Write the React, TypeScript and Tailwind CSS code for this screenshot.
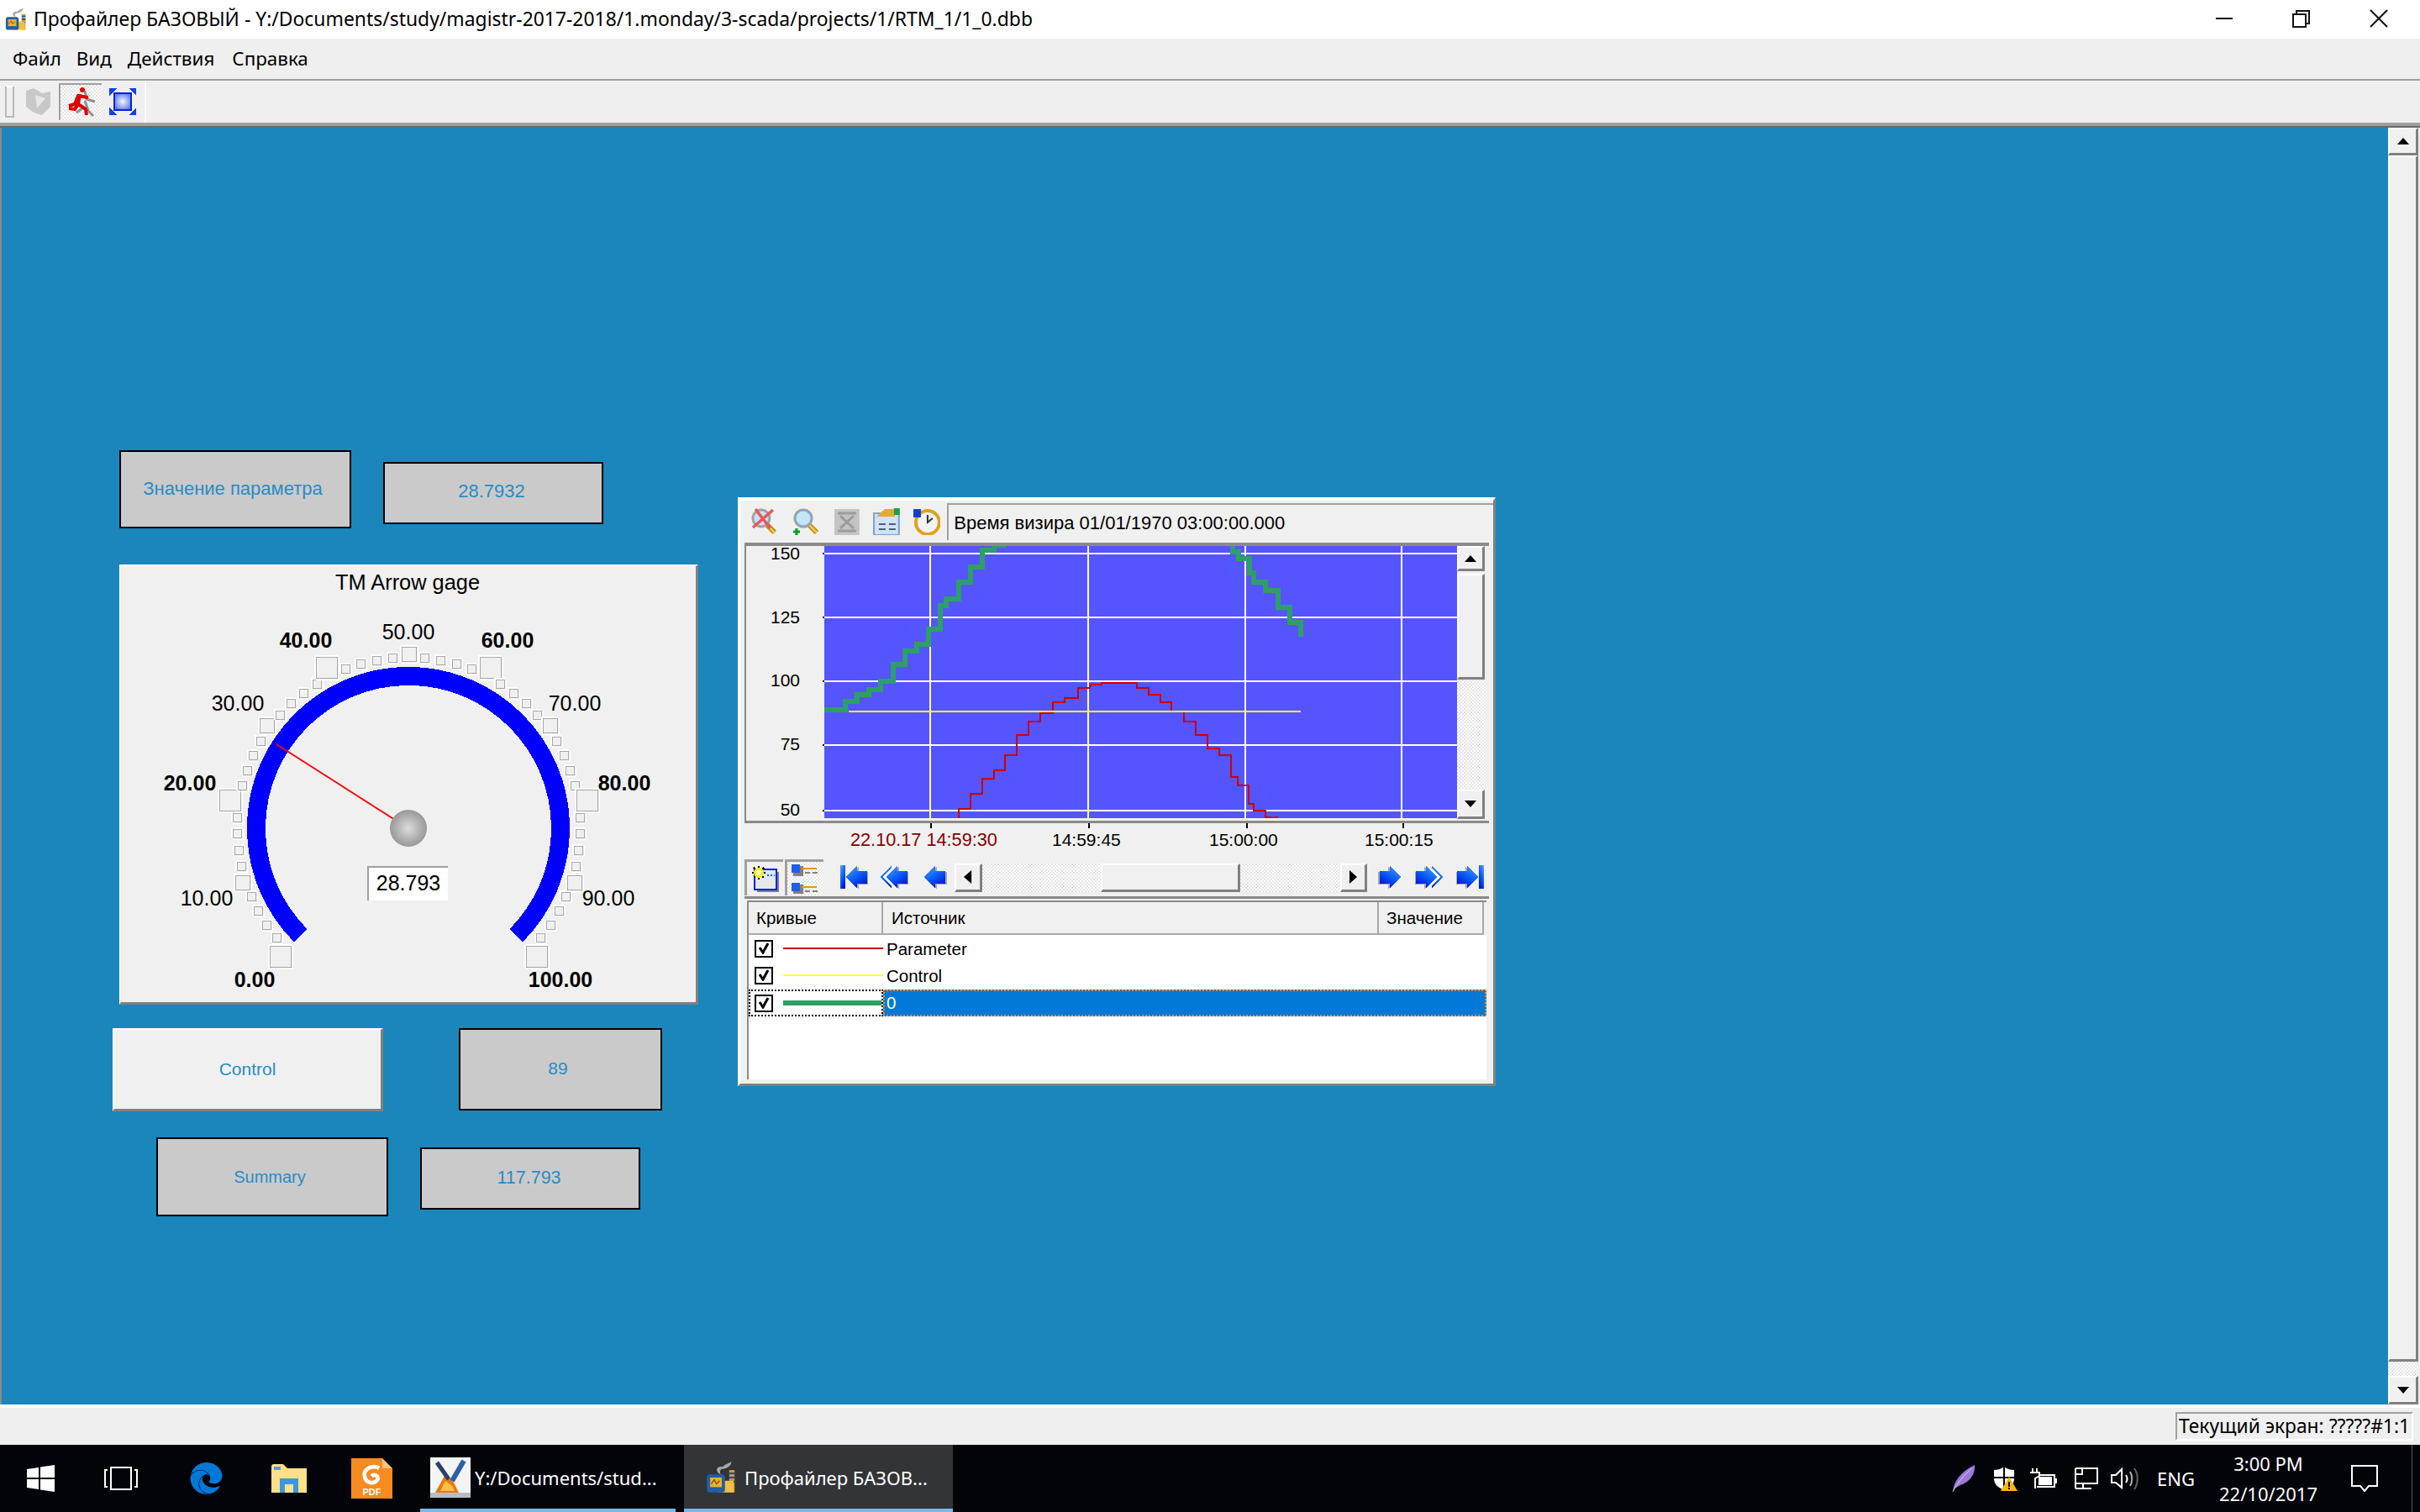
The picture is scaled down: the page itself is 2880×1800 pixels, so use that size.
import { FaEdge } from 'react-icons/fa';

const CHECKER = "bg-[image:repeating-conic-gradient(#e4e4e4_0_25%,#ffffff_0_50%)] bg-[length:4px_4px]";

// step traces, in the plot's own 1284x972 grid
const GREEN_A = "190,794 233,794 233,764 257,764 257,740 281,740 281,722 305,722 305,692 329,692 329,632 353,632 353,584 377,584 377,560 401,560 401,506 425,506 425,422 438,422 438,398 463,398 463,338 487,338 487,284 511,284 511,224 535,224 535,206 560,206";
const GREEN_B = "1012,200 1018,200 1018,230 1030,230 1030,254 1052,254 1052,306 1062,306 1062,338 1086,338 1086,368 1110,368 1110,428 1134,428 1134,482 1157,482 1157,534";
const RED = "462,1190 462,1150 486,1150 486,1095 510,1095 510,1041 534,1041 534,1011 557,1011 557,957 581,957 581,885 605,885 605,837 629,837 629,806 653,806 653,767 677,767 677,752 705,752 705,716 728,716 728,704 752,704 752,698 824,698 824,716 848,716 848,741 872,741 872,767 895,767 895,800 919,800 919,837 943,837 943,885 967,885 967,933 991,933 991,957 1015,957 1015,1035 1029,1035 1029,1065 1051,1065 1051,1130 1062,1130 1062,1155 1086,1155 1086,1179 1110,1179";

const H_GRID = [236, 465, 692, 920, 1155];
const V_GRID = [404, 725, 1045, 1361];

const GAUGE_LABELS = [
  { text: '0.00', x: 303, y: 1166, bold: true },
  { text: '10.00', x: 246, y: 1069, bold: false },
  { text: '20.00', x: 226, y: 932, bold: true },
  { text: '30.00', x: 283, y: 837, bold: false },
  { text: '40.00', x: 364, y: 762, bold: true },
  { text: '50.00', x: 486, y: 752, bold: false },
  { text: '60.00', x: 604, y: 762, bold: true },
  { text: '70.00', x: 684, y: 837, bold: false },
  { text: '80.00', x: 743, y: 932, bold: true },
  { text: '90.00', x: 724, y: 1069, bold: false },
  { text: '100.00', x: 667, y: 1166, bold: true },
];

function GaugeTicks() {
  const ticks = [];
  for (let i = 0; i <= 50; i++) {
    const big = i % 10 === 0;
    const mid = i % 10 === 5;
    const size = big ? 25 : mid ? 17 : 10;
    const r = big ? 215 : mid ? 208 : 204;
    const a = ((225 - 5.4 * i) * Math.PI) / 180;
    const x = Math.round(486 + r * Math.cos(a) - size / 2);
    const y = Math.round(986 - r * Math.sin(a) - size / 2);
    ticks.push(
      <g key={i} shapeRendering="crispEdges">
        <rect x={x} y={y} width={size} height={size} fill="#f0f0f0" stroke="#a8a8a8" strokeWidth="1" />
        <path d={`M${x - 1} ${y + size + 1}V${y - 1}H${x + size + 1}`} fill="none" stroke="#ffffff" strokeWidth="2" />
        <path d={`M${x + size + 2} ${y}V${y + size + 2}H${x}`} fill="none" stroke="#ffffff" strokeWidth="1" />
      </g>
    );
  }
  return <>{ticks}</>;
}

function Gauge() {
  return (
    <div className="absolute left-[140px] top-[520px] w-[689px] h-[524px] bg-[#f0f0f0] border-t-2 border-l-2 border-white border-r-[3px] border-b-[3px] border-r-[#808080] border-b-[#808080]">
      <svg viewBox="144 674 684 519" className="w-[684px] h-[519px] block" fontFamily="Liberation Sans, sans-serif">
        <defs>
          <radialGradient id="hub">
            <stop offset="0" stopColor="#dcdcdc" />
            <stop offset="1" stopColor="#989898" />
          </radialGradient>
        </defs>
        <text x="485" y="693" textAnchor="middle" dominantBaseline="central" fontSize="25.4" fill="#000">TM Arrow gage</text>
        <GaugeTicks />
        <path d="M358 1114A181 181 0 1 1 614 1114" fill="none" stroke="#0000ff" strokeWidth="22" shapeRendering="crispEdges" />
        <line x1="329" y1="886" x2="470" y2="976" stroke="#ff0000" strokeWidth="2" />
        <circle cx="486" cy="986" r="22" fill="url(#hub)" />
        {GAUGE_LABELS.map((l) => (
          <text key={l.text} x={l.x} y={l.y} textAnchor="middle" dominantBaseline="central" fontSize="25" fontWeight={l.bold ? 700 : 400} fill="#000">
            {l.text}
          </text>
        ))}
        <rect x="437" y="1031" width="96" height="41" fill="#ffffff" />
        <path d="M438 1072V1032H533" fill="none" stroke="#a0a0a0" strokeWidth="2" />
        <text x="486" y="1051" textAnchor="middle" dominantBaseline="central" fontSize="25" fill="#000">28.793</text>
      </svg>
    </div>
  );
}

function ValueBox({ text, className }: { text: string; className: string }) {
  return (
    <div className={`absolute flex items-center justify-center bg-[#cacaca] border-2 border-black text-[#2a8cc4] ${className}`}>
      {text}
    </div>
  );
}

function Tri({ dir, size = 14 }: { dir: 'up' | 'down' | 'left' | 'right'; size?: number }) {
  const points = { up: '0,8 14,8 7,0', down: '0,0 14,0 7,8', left: '8,0 8,14 0,7', right: '0,0 0,14 8,7' }[dir];
  const vertical = dir === 'up' || dir === 'down';
  return (
    <svg viewBox={vertical ? '0 0 14 8' : '0 0 8 14'} width={vertical ? size : (size * 8) / 14} height={vertical ? (size * 8) / 14 : size}>
      <polygon points={points} fill="#000" />
    </svg>
  );
}

function ScrollBtn({ className, children }: { className: string; children?: React.ReactNode }) {
  return (
    <div className={`flex items-center justify-center bg-[#f0f0f0] border-t-2 border-l-2 border-white border-r-[3px] border-b-[3px] border-r-[#808080] border-b-[#808080] ${className}`}>
      {children}
    </div>
  );
}

function Arrow({ kind, flip }: { kind: 'single' | 'double' | 'end'; flip?: boolean }) {
  const id = `${kind}${flip ? 'r' : 'l'}`;
  const w = kind === 'single' ? 27 : 33;
  const head = (dx: number, fill: string, dy = 0) => (
    <polygon
      transform={`translate(${dx} ${dy})`}
      points="0,14 13,0 13,7 25,7 25,22 13,22 13,28"
      fill={fill}
    />
  );
  return (
    <svg viewBox={`0 0 ${w} 30`} width={w} height={30} shapeRendering="crispEdges" style={flip ? { transform: 'scaleX(-1)' } : undefined}>
      <defs>
        <linearGradient id={id} x1="0" y1="0" x2="0.6" y2="1">
          <stop offset="0" stopColor="#5aa8ff" />
          <stop offset="0.55" stopColor="#0a60f8" />
          <stop offset="1" stopColor="#0018d8" />
        </linearGradient>
      </defs>
      {kind === 'end' && <rect x="0" y="0" width="6" height="28" fill={`url(#${id})`} />}
      {kind === 'single' && (
        <>
          {head(2, '#a8a8a8', 1)}
          {head(0, `url(#${id})`)}
        </>
      )}
      {kind === 'double' && (
        <>
          {head(0, `url(#${id})`)}
          {head(3, '#ffffff')}
          {head(9, '#a8a8a8', 1)}
          {head(7, `url(#${id})`)}
        </>
      )}
      {kind === 'end' && (
        <>
          {head(9, '#a8a8a8', 1)}
          {head(7, `url(#${id})`)}
        </>
      )}
    </svg>
  );
}

function Magnifier({ crossed }: { crossed?: boolean }) {
  return (
    <svg viewBox="0 0 32 32" className="w-[32px] h-[32px]">
      <line x1="19" y1="19" x2="29" y2="29" stroke="#b88410" strokeWidth="6" />
      <line x1="19" y1="19" x2="29" y2="29" stroke="#f4c848" strokeWidth="3" />
      <circle cx="13" cy="12" r="10" fill="#c4e4fa" stroke={crossed ? '#a8a0a0' : '#94a4b0'} strokeWidth="3" />
      {crossed ? (
        <path d="M6 1L24 24M27 2L3 23" stroke="#e8585a" strokeWidth="3.5" />
      ) : (
        <path d="M1 28H9M5 24V32" stroke="#00a020" strokeWidth="3" />
      )}
    </svg>
  );
}

function ChartToolbar() {
  return (
    <div className="h-[50px] flex items-center pl-[12px]">
      <Magnifier crossed />
      <div className="ml-[18px]">
        <Magnifier />
      </div>
      <svg viewBox="0 0 30 31" className="w-[30px] h-[31px] ml-[18px]">
        <rect width="30" height="31" fill="#c4c4c4" />
        <path d="M4 5H26M4 26H26M7 8L23 23M23 8L7 23" stroke="#9c9c9c" strokeWidth="3" />
      </svg>
      <svg viewBox="0 0 32 32" className="w-[32px] h-[32px] ml-[16px]">
        <rect x="1" y="6" width="30" height="26" fill="#cfe2f6" stroke="#7da2ce" strokeWidth="2" />
        <path d="M4 10L14 1H26V10H14Z" fill="#e8a830" />
        <rect x="25" y="0" width="7" height="8" fill="#20a040" />
        <path d="M7 19H15M19 19H27M7 25H15M19 25H27" stroke="#4a6078" strokeWidth="2" />
      </svg>
      <svg viewBox="0 0 34 32" className="w-[34px] h-[32px] ml-[15px]">
        <circle cx="18" cy="17" r="14" fill="#f0f4f8" stroke="#e0a020" strokeWidth="4" />
        <path d="M1 1H10V11L1 11Z" fill="#1040d0" />
        <path d="M18 8V17L24 12" fill="none" stroke="#303030" strokeWidth="2" />
      </svg>
      <div className="ml-[8px] w-[653px] h-[44px] border-t-2 border-l-2 border-[#a0a0a0] flex items-center pl-[6px] text-[22px] text-black whitespace-nowrap">
        Время визира 01/01/1970 03:00:00.000
      </div>
    </div>
  );
}

function Plot() {
  return (
    <svg viewBox="190 210 1284 972" preserveAspectRatio="none" className="w-[753px] h-[324px] block bg-[#5555ff]">
      {H_GRID.map((y) => (
        <line key={y} x1="190" x2="1474" y1={y} y2={y} stroke="#fff" strokeWidth="2" vectorEffect="non-scaling-stroke" shapeRendering="crispEdges" />
      ))}
      {V_GRID.map((x) => (
        <line key={x} x1={x} x2={x} y1="210" y2="1182" stroke="#fff" strokeWidth="2" vectorEffect="non-scaling-stroke" shapeRendering="crispEdges" />
      ))}
      <polyline points={GREEN_A} fill="none" stroke="#2ca066" strokeWidth="6" vectorEffect="non-scaling-stroke" shapeRendering="crispEdges" />
      <polyline points={GREEN_B} fill="none" stroke="#2ca066" strokeWidth="6" vectorEffect="non-scaling-stroke" shapeRendering="crispEdges" />
      <polyline points={RED} fill="none" stroke="#cc0000" strokeWidth="2" vectorEffect="non-scaling-stroke" shapeRendering="crispEdges" />
      <line x1="240" x2="1156" y1="801" y2="801" stroke="#ffff33" strokeWidth="2" vectorEffect="non-scaling-stroke" shapeRendering="crispEdges" />
    </svg>
  );
}

function ChartArea() {
  const yLabels = [
    { t: '150', c: 'top-[8px]', d: 'top-[8px]' },
    { t: '125', c: 'top-[84px]', d: 'top-[84px]' },
    { t: '100', c: 'top-[159px]', d: 'top-[160px]' },
    { t: '75', c: 'top-[235px]', d: 'top-[236px]' },
    { t: '50', c: 'top-[313px]', d: 'top-[314px]' },
  ];
  return (
    <div className="mx-[5px] h-[334px] flex border-t-4 border-b-[3px] border-[#8a8a8a]">
      <div className="relative w-[95px] h-full border-l-2 border-[#8a8a8a]">
        {yLabels.map((l) => (
          <div key={l.t}>
            <span className={`absolute right-[29px] -translate-y-1/2 text-[21px] leading-none text-black ${l.c}`}>{l.t}</span>
            <span className={`absolute right-0 w-[2px] h-[2px] bg-black ${l.d}`} />
          </div>
        ))}
      </div>
      <Plot />
      <div className="w-[33px] flex flex-col">
        <ScrollBtn className="h-[30px]"><Tri dir="up" /></ScrollBtn>
        <div className="h-[3px]" />
        <ScrollBtn className="h-[126px]" />
        <div className={`h-[131px] ${CHECKER}`} />
        <ScrollBtn className="h-[35px]"><Tri dir="down" /></ScrollBtn>
      </div>
    </div>
  );
}

function TimeAxis() {
  const ticks = ['left-[226px]', 'left-[414px]', 'left-[602px]', 'left-[788px]'];
  return (
    <div className="relative h-[42px] text-[21px] leading-none">
      {ticks.map((t) => (
        <span key={t} className={`absolute top-0 w-[2px] h-[6px] bg-black ${t}`} />
      ))}
      <span className="absolute left-[131px] top-[9px] text-[21.7px] text-[#8b0000] whitespace-nowrap">22.10.17 14:59:30</span>
      <span className="absolute left-[371px] top-[9px] text-black">14:59:45</span>
      <span className="absolute left-[558px] top-[9px] text-black">15:00:00</span>
      <span className="absolute left-[743px] top-[9px] text-black">15:00:15</span>
    </div>
  );
}

function NavRow() {
  return (
    <div className="h-[45px] flex items-center pl-[5px]">
      <div className="w-[46px] h-[43px] border-t-[3px] border-l-[3px] border-[#a0a0a0] flex items-center justify-center bg-[#f0f0f0]">
        <svg viewBox="0 0 32 32" className="w-[32px] h-[32px]" shapeRendering="crispEdges">
          <rect x="6" y="8" width="26" height="24" fill="#808080" />
          <rect x="3" y="5" width="26" height="24" fill="#dce8fa" stroke="#1020e0" strokeWidth="2" />
          <rect x="5" y="17" width="22" height="10" fill="#e8e8e8" />
          <path d="M18 12H27" stroke="#2060e0" strokeWidth="2" strokeDasharray="2 2" />
          <path d="M0 9H16M8 1V17M2 3L14 15M14 3L2 15" stroke="#000" strokeWidth="1.5" />
          <circle cx="8" cy="9" r="6" fill="#f8f000" />
          <circle cx="8" cy="9" r="3" fill="#fffbc0" />
        </svg>
      </div>
      <div className={`ml-[2px] w-[46px] h-[43px] border-t-[3px] border-l-[3px] border-[#a0a0a0] flex items-center justify-center ${CHECKER}`}>
        <svg viewBox="0 0 34 36" className="w-[34px] h-[36px]" shapeRendering="crispEdges">
          <rect x="2" y="3" width="12" height="12" fill="#808080" />
          <rect x="0" y="1" width="10" height="10" fill="#1f5fe8" />
          <path d="M12 6H30" stroke="#e09a10" strokeWidth="2" />
          <path d="M16 11H32" stroke="#808080" strokeWidth="2" strokeDasharray="6 3" />
          <rect x="2" y="25" width="12" height="12" fill="#808080" />
          <rect x="0" y="23" width="10" height="10" fill="#1f5fe8" />
          <path d="M12 28H30" stroke="#e09a10" strokeWidth="2" />
          <path d="M16 33H32" stroke="#808080" strokeWidth="2" strokeDasharray="6 3" />
        </svg>
      </div>
      <div className="ml-[20px] flex"><Arrow kind="end" /></div>
      <div className="ml-[15px] flex"><Arrow kind="double" /></div>
      <div className="ml-[19px] flex"><Arrow kind="single" /></div>
      <div className="ml-[9px] w-[491px] h-[34px] flex">
        <ScrollBtn className="w-[33px]"><Tri dir="left" size={16} /></ScrollBtn>
        <div className={`w-[141px] ${CHECKER}`} />
        <ScrollBtn className="w-[166px]" />
        <div className={`w-[119px] ${CHECKER}`} />
        <ScrollBtn className="w-[32px]"><Tri dir="right" size={16} /></ScrollBtn>
      </div>
      <div className="ml-[13px] flex"><Arrow kind="single" flip /></div>
      <div className="ml-[17px] flex"><Arrow kind="double" flip /></div>
      <div className="ml-[16px] flex"><Arrow kind="end" flip /></div>
    </div>
  );
}

function CheckBox() {
  return (
    <span className="w-[22px] h-[21px] border-2 border-black bg-white flex items-center justify-center shrink-0">
      <svg viewBox="0 0 14 14" className="w-[14px] h-[14px]"><path d="M2 6L6 12L12 1" fill="none" stroke="#000" strokeWidth="3" /></svg>
    </span>
  );
}

function CurveTable() {
  return (
    <div className="mt-[2px] mx-[8px] h-[213px] bg-white border-t-2 border-l-2 border-[#8a8a8a] text-[20.5px] text-black">
      <div className="flex h-[39px] bg-[#f0f0f0]">
        <div className="w-[160px] pl-[9px] pt-[2px] flex items-center border-r-2 border-b-2 border-[#a8a8a8]">Кривые</div>
        <div className="w-[590px] pl-[10px] pt-[2px] flex items-center border-r-2 border-b-2 border-[#a8a8a8]">Источник</div>
        <div className="w-[125px] pl-[9px] pt-[2px] flex items-center border-r-2 border-b-2 border-[#a8a8a8]">Значение</div>
      </div>
      <div className="flex h-[32px] items-center">
        <div className="w-[160px] pl-[7px] flex items-center">
          <CheckBox />
          <span className="ml-[12px] flex-1 h-[2px] bg-[#cc0000]" />
        </div>
        <span className="pl-[4px] pt-[2px]">Parameter</span>
      </div>
      <div className="flex h-[32px] items-center">
        <div className="w-[160px] pl-[7px] flex items-center">
          <CheckBox />
          <span className="ml-[12px] flex-1 h-[2px] bg-[#ffff33]" />
        </div>
        <span className="pl-[4px] pt-[2px]">Control</span>
      </div>
      <div className="flex h-[32px] mt-[1px]">
        <div className="w-[160px] pl-[5px] flex items-center border-2 border-dotted border-black">
          <CheckBox />
          <span className="ml-[12px] flex-1 h-[6px] bg-[#2ca066]" />
        </div>
        <div className="flex-1 pl-[2px] flex items-center bg-[#0078d7] border-2 border-dotted border-[#ff8a1e] text-white">0</div>
      </div>
    </div>
  );
}

function ChartWindow() {
  return (
    <div className="absolute left-[876px] top-[440px] w-[902px] h-[701px] bg-[#f0f0f0] border-t-4 border-l-[3px] border-white border-r-[3px] border-b-[3px] border-r-[#808080] border-b-[#808080]">
      <ChartToolbar />
      <ChartArea />
      <TimeAxis />
      <NavRow />
      <div className="mx-[5px] h-[3px] bg-[#8a8a8a]" />
      <CurveTable />
    </div>
  );
}

function FactoryIcon({ className }: { className: string }) {
  return (
    <svg viewBox="0 0 30 32" className={className}>
      <path d="M12 12C8 8 12 5 16 6C18 3 22 3 24 1C24 6 18 8 15 8C13 9 13 11 14 13Z" fill="#a8a8a8" />
      <rect x="22" y="9" width="5" height="21" fill="#e8a020" />
      <path d="M22 12H27M22 16H27M22 20H27" stroke="#2050a0" strokeWidth="2" />
      <rect x="12" y="19" width="14" height="11" fill="#f0c040" />
      <rect x="1" y="13" width="17" height="17" rx="3" fill="#1f5fa8" />
      <rect x="4" y="16" width="11" height="9" fill="#e8b030" />
      <path d="M5 22L8 18L10 22L13 19" fill="none" stroke="#805010" strokeWidth="1" />
    </svg>
  );
}

function RunnerIcon() {
  return (
    <svg viewBox="0 0 36 36" className="w-[36px] h-[36px]">
      <g fill="none" stroke="#909090" strokeWidth="3">
        <path d="M22 4L24 14L34 17M22 16L26 28L32 34M20 24L12 30" />
      </g>
      <circle cx="19" cy="3" r="3" fill="#e00000" />
      <g fill="none" stroke="#e00000" strokeWidth="4">
        <path d="M3 22L10 20L14 10L26 12" />
        <path d="M16 8L14 20L23 26L24 33" />
        <path d="M14 20L10 26L3 25" />
      </g>
    </svg>
  );
}

function TopToolbar() {
  return (
    <div className="h-[54px] flex bg-[#efefef] border-b-4 border-[#a0a0a0]">
      <div className="w-[172px] flex items-center">
        <div className="ml-[6px] w-[11px] h-[38px] border-2 border-[#b8b8b8] border-t-white" />
        <svg viewBox="0 0 30 32" className="ml-[13px] w-[30px] h-[32px]">
          <path d="M1 3L10 0L20 6L30 4V22L20 32L10 29L1 22Z" fill="#c8c8c8" />
          <path d="M12 8L24 12L14 24Z" fill="#e8e8e8" />
        </svg>
        <div className={`ml-[10px] w-[51px] h-[44px] border-t-2 border-l-2 border-[#a0a0a0] flex items-center justify-center ${CHECKER}`}>
          <RunnerIcon />
        </div>
        <svg viewBox="0 0 32 32" className="ml-[9px] w-[32px] h-[32px]" shapeRendering="crispEdges">
          <defs>
            <radialGradient id="fit">
              <stop offset="0" stopColor="#f4f8ff" />
              <stop offset="1" stopColor="#6a8ae8" />
            </radialGradient>
          </defs>
          <rect x="6" y="6" width="20" height="20" fill="url(#fit)" stroke="#0a20e0" strokeWidth="2" />
          <path d="M0 0H9L0 9ZM32 0H23L32 9ZM0 32H9L0 23ZM32 32H23L32 23Z" fill="#1040f0" />
        </svg>
      </div>
      <div className="w-[2px] bg-white" />
    </div>
  );
}

function Desktop() {
  return (
    <div className="flex-1 min-h-0 flex pr-[2px] bg-[#efefef] border-t-2 border-[#696969]">
      <div className="relative flex-1 bg-[#1b86bb] border-l-2 border-[#8a8a8a]">
        <ValueBox text="Значение параметра" className="left-[140px] top-[384px] w-[276px] h-[93px] text-[22px] pb-[2px] pr-[6px]" />
        <ValueBox text="28.7932" className="left-[454px] top-[398px] w-[262px] h-[74px] text-[22px] pb-[6px] pr-[4px]" />
        <Gauge />
        <ChartWindow />
        <div className="absolute left-[132px] top-[1072px] w-[322px] h-[99px] flex items-center justify-center bg-[#f0f0f0] border-t-2 border-l-2 border-white border-r-[3px] border-b-[3px] border-r-[#808080] border-b-[#808080] text-[21px] text-[#2a8cc4]">
          Control
        </div>
        <ValueBox text="89" className="left-[544px] top-[1072px] w-[242px] h-[98px] text-[21px] pb-[2px] pr-[6px]" />
        <ValueBox text="Summary" className="left-[184px] top-[1202px] w-[276px] h-[94px] text-[20px] pr-[6px]" />
        <ValueBox text="117.793" className="left-[498px] top-[1214px] w-[262px] h-[74px] text-[21.5px] pb-[2px] pr-[3px]" />
      </div>
      <div className="w-[36px] flex flex-col">
        <ScrollBtn className="h-[33px]"><Tri dir="up" /></ScrollBtn>
        <ScrollBtn className="flex-1" />
        <div className={`h-[17px] ${CHECKER}`} />
        <ScrollBtn className="h-[34px]"><Tri dir="down" /></ScrollBtn>
      </div>
    </div>
  );
}

function TaskbarApp({ icon, label, active, className }: { icon: React.ReactNode; label: string; active?: boolean; className: string }) {
  return (
    <div className={`h-full flex items-center border-b-4 border-[#76b9ed] whitespace-nowrap ${active ? 'bg-[#333438]' : ''} ${className}`}>
      {icon}
      {label}
    </div>
  );
}

function Tray() {
  return (
    <div className="flex-1 h-full flex items-center justify-end text-white font-['Noto_Sans',sans-serif]">
      <svg viewBox="0 0 28 32" className="w-[28px] h-[32px]">
        <path d="M1 32C2 20 10 8 27 0C28 10 22 20 10 24L3 28Z" fill="#9a78d8" />
        <path d="M1 32C6 22 14 12 24 4" fill="none" stroke="#e0d0f8" strokeWidth="1" />
      </svg>
      <svg viewBox="0 0 29 29" className="ml-[21px] w-[29px] h-[29px]">
        <path d="M13 0C9 3 5 4 1 4V14C1 21 6 25 13 28C20 25 25 21 25 14V4C21 4 17 3 13 0Z" fill="#fff" />
        <path d="M13 0V28M1 13H25" stroke="#000" strokeWidth="2" />
        <path d="M19 12L29 29H9Z" fill="#f8b810" />
        <path d="M19 18V24M19 25V27" stroke="#000" strokeWidth="2" />
      </svg>
      <svg viewBox="0 0 32 24" className="ml-[15px] w-[32px] h-[24px]" fill="none" stroke="#fff" strokeWidth="2">
        <path d="M3 0V5M8 0V5M0 5H11V9L6 12V24" />
        <path d="M11 8H29V22H8" />
        <rect x="10" y="10" width="16" height="10" fill="#fff" stroke="none" />
        <path d="M31 12V18" />
      </svg>
      <svg viewBox="0 0 32 26" className="ml-[17px] w-[32px] h-[26px]" fill="none" stroke="#fff" strokeWidth="2">
        <path d="M5 1H31V19H5V1M5 1H13V8H5M5 19V25M5 25H24M14 19V25" />
      </svg>
      <svg viewBox="0 0 33 29" className="ml-[15px] w-[33px] h-[29px]" fill="none" strokeWidth="2">
        <path d="M1 10H6L13 3V25L6 19H1Z" stroke="#fff" />
        <path d="M18 10C20 13 20 16 18 19" stroke="#fff" />
        <path d="M23 6C26 11 26 18 23 23" stroke="#b0b0b0" />
        <path d="M28 2C33 9 33 20 28 27" stroke="#606060" />
      </svg>
      <span className="ml-[22px] text-[22px] leading-none">ENG</span>
      <div className="ml-[27px] w-[121px] flex flex-col items-center text-[22px] leading-[36px]">
        <span>3:00 PM</span>
        <span>22/10/2017</span>
      </div>
      <svg viewBox="0 0 32 32" className="ml-[38px] w-[32px] h-[32px]" fill="none" stroke="#fff" strokeWidth="2">
        <path d="M1 1H31V25H21L16 31L11 25H1Z" />
      </svg>
      <div className="ml-[40px] w-px h-full bg-[#555]" />
      <div className="w-[9px]" />
    </div>
  );
}

function Taskbar() {
  return (
    <div className="h-[80px] flex items-center bg-[#03040a] text-white font-['Noto_Sans',sans-serif] text-[22px]">
      <svg viewBox="0 0 33 32" className="ml-[32px] w-[33px] h-[32px]" fill="#fff">
        <path d="M0 5L14 3V15H0ZM16 2.6L33 0V15H16ZM0 17H14V29L0 27ZM16 17H33V32L16 29.4Z" />
      </svg>
      <svg viewBox="0 0 40 28" className="ml-[59px] w-[40px] h-[28px]" fill="none" stroke="#fff" strokeWidth="2">
        <rect x="8" y="1" width="24" height="26" />
        <path d="M4 4H1V24H4M36 4H39V24H36" />
      </svg>
      <FaEdge className="ml-[62px] w-[39px] h-[42px] text-[#0078d7]" />
      <svg viewBox="0 0 42 34" className="ml-[58px] w-[42px] h-[34px]">
        <path d="M0 3C0 1 1 0 3 0H14L19 5H42V34H0Z" fill="#ffe08a" />
        <rect x="3" y="3" width="8" height="4" fill="#4aa0e8" />
        <path d="M10 17H32V34H26V24H16V34H10Z" fill="#3a98e0" />
      </svg>
      <div className="ml-[53px] relative w-[49px] h-[48px] bg-[#f68b1f] flex flex-col items-center justify-end pb-[2px]">
        <svg viewBox="0 0 24 24" className="absolute top-[6px] left-[10px] w-[28px] h-[28px]" fill="none" stroke="#fff" strokeWidth="4">
          <path d="M20 5C12 1 4 6 5 13C6 20 14 22 18 17C20 14 16 10 12 13" />
        </svg>
        <span className="absolute right-0 top-0 w-0 h-0 border-t-[12px] border-l-[12px] border-t-[#03040a] border-l-[#ffc37d]" />
        <span className="text-[11px] leading-none font-bold text-white font-['Liberation_Sans',sans-serif]">PDF</span>
      </div>
      <TaskbarApp
        className="ml-[33px] w-[304px] pl-[12px] gap-[5px] pt-[2px]"
        label="Y:/Documents/stud..."
        icon={
          <svg viewBox="0 0 48 48" className="w-[48px] h-[48px] shrink-0">
            <rect width="48" height="48" fill="#f4f4f4" />
            <path d="M6 42L18 20L28 30L34 42Z" fill="#e87a10" />
            <path d="M12 40L18 28L26 34L29 40Z" fill="#ffc040" />
            <path d="M8 6L22 26" stroke="#28406e" strokeWidth="5" />
            <path d="M40 4L26 28" stroke="#2f5fa8" strokeWidth="6" />
            <rect y="42" width="48" height="6" fill="#b4bcc8" />
          </svg>
        }
      />
      <TaskbarApp
        active
        className="ml-[10px] w-[320px] pl-[26px] gap-[8px] pt-[2px]"
        label="Профайлер БАЗОВ..."
        icon={<FactoryIcon className="w-[38px] h-[44px] shrink-0" />}
      />
      <Tray />
    </div>
  );
}

export default function App() {
  return (
    <div className="w-[2880px] h-[1800px] flex flex-col overflow-hidden bg-[#efefef] font-['Liberation_Sans',sans-serif] text-black">
      <div className="h-[46px] shrink-0 bg-white flex items-center pl-[6px] text-[22.9px] font-['Noto_Sans',sans-serif] whitespace-nowrap">
        <FactoryIcon className="w-[27px] h-[30px]" />
        <span className="ml-[7px]">Профайлер БАЗОВЫЙ - Y:/Documents/study/magistr-2017-2018/1.monday/3-scada/projects/1/RTM_1/1_0.dbb</span>
        <svg viewBox="0 0 204 22" className="ml-auto mr-[39px] w-[204px] h-[22px] overflow-visible" fill="none" stroke="#111" strokeWidth="2">
          <path d="M0 10H20" />
          <path d="M92 5H107V20H92ZM96 5V1H111V16H107" />
          <path d="M184 0L204 20M204 0L184 20" />
        </svg>
      </div>
      <div className="h-[50px] shrink-0 flex items-center bg-[#efefef] border-b-2 border-[#a0a0a0] text-[22.4px] font-['Noto_Sans',sans-serif]">
        <span className="ml-[15px]">Файл</span>
        <span className="ml-[18px]">Вид</span>
        <span className="ml-[19px]">Действия</span>
        <span className="ml-[21px]">Справка</span>
      </div>
      <TopToolbar />
      <Desktop />
      <div className="h-[48px] shrink-0 flex items-center justify-end bg-[#efefef] border-t-4 border-white">
        <div className="mr-[8px] w-[283px] h-[34px] flex items-center pl-[2px] whitespace-nowrap border-t-2 border-l-2 border-[#a0a0a0] border-r-2 border-b-2 border-r-white border-b-white text-[22.8px] font-['Noto_Sans',sans-serif]">
          Текущий экран: ?????#1:1
        </div>
      </div>
      <Taskbar />
    </div>
  );
}
